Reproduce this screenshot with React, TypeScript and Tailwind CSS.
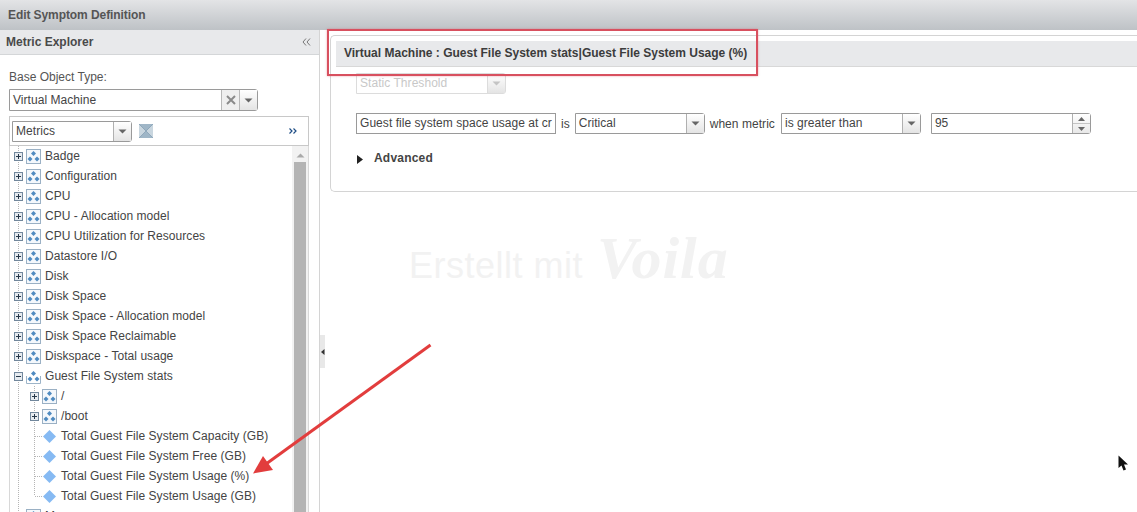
import React from "react";

const Caret = ({ color = "#666" }: { color?: string }) => (
  <svg width="9" height="5" viewBox="0 0 9 5"><path d="M0.5 0.5H8.5L4.5 4.5Z" fill={color} /></svg>
);

const Select = ({ w, text, disabled }: { w: string; text: string; disabled?: boolean }) => (
  <div className={`flex h-[21px] ${w} rounded-r-[3px] border ${disabled ? "border-[#dcdcdc] text-[#c8c8c8]" : "border-[#9a9a9a] text-[#444]"}`}>
    <div className="flex-1 truncate pl-[3px] leading-[19px] tracking-[0.05px]">{text}</div>
    <div className={`flex w-[18px] items-center justify-center border-l bg-gradient-to-b from-white to-[#e4e4e4] ${disabled ? "border-[#dcdcdc]" : "border-[#b0b0b0]"}`}>
      <Caret color={disabled ? "#c4c4c4" : "#666"} />
    </div>
  </div>
);

const GroupIcon = ({ open }: { open?: boolean }) => (
  <svg width="15" height="15" viewBox="0 0 15 15" className="shrink-0">
    {open ? (
      <path d="M0.5 7V14.5H14.5V7" fill="none" stroke="#9db4c8" />
    ) : (
      <rect x="0.5" y="0.5" width="14" height="14" fill="#f4f8fc" stroke="#9ab0c4" />
    )}
    <g fill="#4f8ac0">
      <path d="M7.5 2L10 4.5L7.5 7L5 4.5Z" />
      <path d="M4 7.500L6.500 10L4 12.500L1.500 10Z" />
      <path d="M11 7.500L13.500 10L11 12.500L8.500 10Z" />
    </g>
  </svg>
);

const Diamond = () => (
  <svg width="15" height="15" viewBox="0 0 15 15" className="shrink-0">
    <path d="M7.5 1L14 7.5L7.5 14L1 7.5Z" fill="#86baf3" />
  </svg>
);

const Guide = ({ kind, open, cut }: { kind: "line" | "box" | "leaf"; open?: boolean; cut?: boolean }) => (
  <svg width="16" height="20" viewBox="0 0 16 20" className="shrink-0">
    <path d={cut ? "M8.5 0V10" : "M8.5 0V20"} stroke="#b5b5b5" strokeDasharray="1 1" fill="none" />
    {kind === "leaf" && <path d="M9 10.5H16" stroke="#b5b5b5" strokeDasharray="1 1" fill="none" />}
    {kind === "box" && (
      <>
        <rect x="4.5" y="6.5" width="8" height="8" fill="#e6ebf0" stroke="#71879c" />
        <path d={open ? "M6 10.5H11" : "M6 10.5H11M8.5 8V13"} stroke="#26384a" fill="none" />
      </>
    )}
  </svg>
);

const top = [
  "Badge",
  "Configuration",
  "CPU",
  "CPU - Allocation model",
  "CPU Utilization for Resources",
  "Datastore I/O",
  "Disk",
  "Disk Space",
  "Disk Space - Allocation model",
  "Disk Space Reclaimable",
  "Diskspace - Total usage",
];
const leaves = [
  "Total Guest File System Capacity (GB)",
  "Total Guest File System Free (GB)",
  "Total Guest File System Usage (%)",
  "Total Guest File System Usage (GB)",
];

const Label = ({ children }: { children: React.ReactNode }) => (
  <span className="ml-1 whitespace-nowrap tracking-[0.05px] text-[#444]">{children}</span>
);

export default function App() {
  return (
    <div className="relative flex h-[512px] w-[1137px] flex-col overflow-hidden bg-white font-['Liberation_Sans',Arial,sans-serif] text-[12px] text-[#444]">
      <div className="h-[30px] shrink-0 bg-gradient-to-b from-[#e3e4e6] to-[#bec2c6] pl-2 font-bold leading-[30px] tracking-[-0.08px] text-[#555]">
        Edit Symptom Definition
      </div>
      <div className="flex min-h-0 flex-1">
        <div className="flex w-[320px] shrink-0 flex-col border-r border-[#d4d4d4]">
          <div className="flex h-[25px] shrink-0 items-center justify-between border-b border-[#d4d6d8] bg-[#e8e9eb] pl-1.5 pr-2">
            <span className="font-bold text-[#4a4a4a]">Metric Explorer</span>
            <svg width="9" height="8" viewBox="0 0 9 8" fill="none" stroke="#777"><path d="M4 .5L1 4l3 3.500M8 .5L5 4l3 3.500" /></svg>
          </div>
          <div className="flex min-h-0 flex-1 flex-col pl-[9px] pr-[10px]">
            <div className="mt-[15px] h-[14px] leading-[14px] text-[#555]">Base Object Type:</div>
            <div className="mt-[5px] flex h-[22px] w-[249px] shrink-0 rounded-r-[3px] border border-[#9a9a9a]">
              <div className="flex-1 pl-[3px] leading-[20px] tracking-[0.05px]">Virtual Machine</div>
              <div className="flex w-[18px] items-center justify-center border-l border-[#b8b8b8] bg-[#efefef]">
                <svg width="10" height="10" viewBox="0 0 10 10" stroke="#8a8a8a" strokeWidth="2"><path d="M1 1l8 8M9 1l-8 8" /></svg>
              </div>
              <div className="flex w-[18px] items-center justify-center border-l border-[#b8b8b8] bg-gradient-to-b from-white to-[#e4e4e4]">
                <Caret />
              </div>
            </div>
            <div className="mt-[5px] flex h-[30px] shrink-0 items-center border border-[#c8c8c8] pl-[2px] pr-[11px]">
              <Select w="w-[120px]" text="Metrics" />
              <svg width="14" height="14" viewBox="0 0 14 14" className="ml-[7px]">
                <rect width="14" height="14" fill="#9fb6c7" />
                <path d="M0 0L7 7L0 14ZM14 0L7 7L14 14Z" fill="#c9d6df" />
                <path d="M0 0L14 14M14 0L0 14" stroke="#7f9bb0" strokeWidth="0.7" />
              </svg>
              <svg width="8" height="6" viewBox="0 0 8 6" fill="none" stroke="#1f4e86" strokeWidth="1.200" className="ml-auto">
                <path d="M.5 .5L3 3L.5 5.500M4.500 .5L7 3L4.500 5.500" />
              </svg>
            </div>
            <div className="flex min-h-0 flex-1 overflow-hidden border-l border-r border-[#d8d8d8]">
              <div className="min-w-0 flex-1">
                {top.map((t) => (
                  <div key={t} className="flex h-5 items-center">
                    <Guide kind="box" />
                    <GroupIcon />
                    <Label>{t}</Label>
                  </div>
                ))}
                <div className="flex h-5 items-center">
                  <Guide kind="box" open />
                  <GroupIcon open />
                  <Label>Guest File System stats</Label>
                </div>
                {["/", "/boot"].map((t) => (
                  <div key={t} className="flex h-5 items-center">
                    <Guide kind="line" />
                    <Guide kind="box" />
                    <GroupIcon />
                    <Label>{t}</Label>
                  </div>
                ))}
                {leaves.map((t, i) => (
                  <div key={t} className="flex h-5 items-center">
                    <Guide kind="line" />
                    <Guide kind="leaf" cut={i === leaves.length - 1} />
                    <Diamond />
                    <Label>{t}</Label>
                  </div>
                ))}
                <div className="flex h-5 items-center">
                  <Guide kind="box" />
                  <GroupIcon />
                  <Label>Memory</Label>
                </div>
              </div>
              <div className="flex w-[16px] shrink-0 flex-col items-center bg-[#f2f2f2]">
                <svg width="9" height="5" viewBox="0 0 9 5" className="mb-[4px] mt-[7px]"><path d="M0.5 4.500H8.500L4.500 .5Z" fill="#aaa" /></svg>
                <div className="w-[12px] flex-1 bg-[#b4b4b4]" />
              </div>
            </div>
          </div>
        </div>
        <div className="w-[10px] shrink-0 pt-[305px]">
          <div className="flex h-[33px] w-[5px] items-center justify-center bg-[#e8e8e8]">
            <svg width="4" height="6" viewBox="0 0 4 6"><path d="M3.500 0V6L0 3Z" fill="#333" /></svg>
          </div>
        </div>
        <div className="min-w-0 flex-1 pt-[5px]">
          <div className="h-[157px] rounded-l-[5px] border-y border-l border-[#d4d4d4] pl-[5px] pt-[5px]">
            <div className="h-[26px] border-b border-[#d8d8d8] bg-[#e8e9eb] pl-2 font-bold leading-[25px] text-[#3c3c3c]">
              Virtual Machine : Guest File System stats|Guest File System Usage (%)
            </div>
            <div className="pl-[20px]">
              <div className="mt-[6px]">
                <Select w="w-[150px]" text="Static Threshold" disabled />
              </div>
              <div className="mt-[19px] flex h-[21px] items-center">
                <div className="h-[21px] w-[200px] truncate border border-[#9a9a9a] pl-[3px] leading-[19px] tracking-[0.05px]">Guest file system space usage at cr</div>
                <span className="ml-[5px] mr-[5px]">is</span>
                <Select w="w-[130px]" text="Critical" />
                <span className="ml-[5px] mr-[6px] tracking-[0.05px]">when metric</span>
                <Select w="w-[140px]" text="is greater than" />
                <div className="ml-[10px] flex h-[21px] w-[160px] rounded-r-[3px] border border-[#9a9a9a]">
                  <div className="flex-1 pl-[3px] leading-[19px]">95</div>
                  <div className="flex w-[18px] flex-col border-l border-[#b0b0b0] bg-gradient-to-b from-white to-[#e8e8e8]">
                    <div className="flex h-[10px] items-center justify-center border-b border-[#c4c4c4]">
                      <svg width="7" height="4" viewBox="0 0 7 4"><path d="M0 4H7L3.500 0Z" fill="#666" /></svg>
                    </div>
                    <div className="flex flex-1 items-center justify-center">
                      <svg width="7" height="4" viewBox="0 0 7 4"><path d="M0 0H7L3.500 4Z" fill="#666" /></svg>
                    </div>
                  </div>
                </div>
              </div>
              <div className="mt-[17px] flex h-[14px] items-center">
                <svg width="6" height="9" viewBox="0 0 6 9" className="ml-[1px] mt-[2px]"><path d="M0 0L6 4.500L0 9Z" fill="#222" /></svg>
                <span className="ml-[11px] font-bold tracking-[0.2px] text-[#444]">Advanced</span>
              </div>
            </div>
          </div>
        </div>
      </div>

      <div className="pointer-events-none absolute left-[409px] top-[228px] flex items-baseline whitespace-nowrap text-[#f2f2f2]">
        <span className="text-[36px] leading-[60px] tracking-[0.5px]">Erstellt mit</span>
        <span className="ml-[14px] font-['Liberation_Serif',serif] text-[60px] font-bold italic leading-[60px] tracking-[1px]">Voila</span>
      </div>

      <div className="pointer-events-none absolute left-[327px] top-[29px] h-[47px] w-[431px] border-2 border-[#d8505f] shadow-[0_0_2px_rgba(216,80,95,0.5)]" />

      <svg className="pointer-events-none absolute left-[245px] top-[335px]" width="195" height="145" viewBox="245 335 195 145">
        <path d="M430.500 345L266 464" stroke="#e23d3d" strokeWidth="3" fill="none" />
        <path d="M253 473.500L263 456L273 470Z" fill="#e23d3d" />
      </svg>

      <svg className="pointer-events-none absolute left-[1118px] top-[455px]" width="11" height="17" viewBox="0 0 11 17">
        <path d="M0.500 0.500V13L3.500 10.500L5.500 15.500L8 14.500L6 9.500H10Z" fill="#111" />
      </svg>
    </div>
  );
}
